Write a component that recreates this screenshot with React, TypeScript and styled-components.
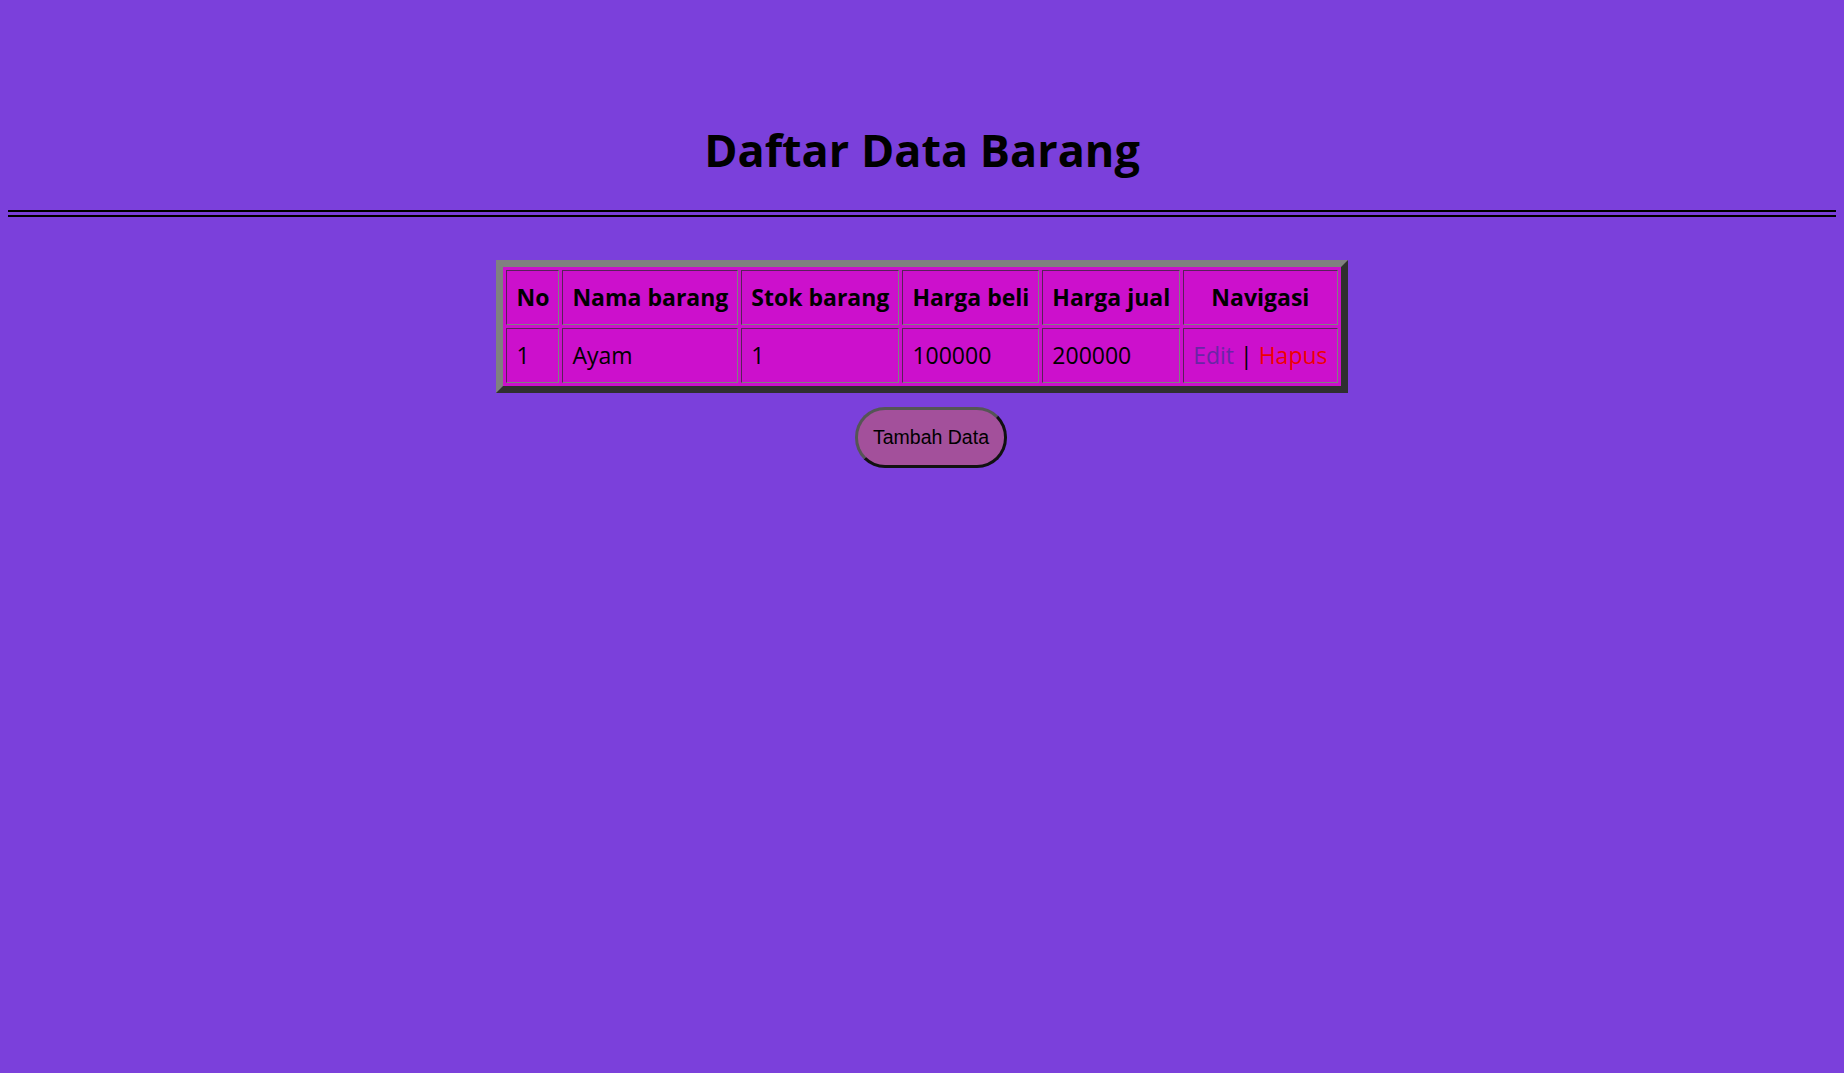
import * as React from "react";
import styled, { createGlobalStyle } from "styled-components";

const bg_color = "#7b40db";
const cell_color = "#cc10cc";

const GlobalStyle = createGlobalStyle`
  html, body {
    margin: 0;
    padding: 0;
    background-color: ${bg_color};
  }
  body {
    padding: 8px;
    font-family: "Open Sans", "Noto Sans", sans-serif;
    color: #000;
  }
`;

const Title = styled.h1`
  margin: 0;
  padding-top: 110px;
  text-align: center;
  font-size: 45px;
  line-height: 64px;
  font-weight: 700;
`;

const Divider = styled.hr`
  margin: 28px 0 0 0;
  height: 3px;
  border: none;
  border-top: 2px solid #000;
  border-bottom: 2px solid #000;
`;

const TableWrap = styled.div`
  display: flex;
  justify-content: center;
  margin-top: 43px;
`;

const Table = styled.table`
  background-color: ${cell_color};
  border-style: solid;
  border-width: 7px;
  border-color: #808080 #2f2f2f #2f2f2f #808080;
  border-spacing: 3px;
  font-size: 23px;
  line-height: 33px;
`;

const HeadCell = styled.th`
  padding: 10px 9px;
  border-style: solid;
  border-width: 1px;
  border-color: #5a1f5a #808080 #808080 #5a1f5a;
  font-weight: 700;
  white-space: nowrap;
`;

const Cell = styled.td<{ $center?: boolean }>`
  padding: 10px 9px;
  border-style: solid;
  border-width: 1px;
  border-color: #5a1f5a #808080 #808080 #5a1f5a;
  text-align: ${(p) => (p.$center ? "center" : "left")};
  white-space: nowrap;
`;

const NavLink = styled.a<{ $danger?: boolean }>`
  color: ${(p) => (p.$danger ? "#f00000" : "#6a25a6")};
  text-decoration: none;
`;

const ButtonRow = styled.div`
  display: flex;
  justify-content: center;
  margin-top: 14px;
  padding-left: 18px;
`;

const AddButton = styled.button`
  font-family: "Liberation Sans", Arial, sans-serif;
  font-size: 19.5px;
  color: #000;
  background-color: #a3509b;
  padding: 16px 15px;
  border-radius: 30px;
  border-style: solid;
  border-width: 3px;
  border-color: #555 #111 #111 #555;
  cursor: pointer;
`;

const rows = [
  { no: 1, nama: "Ayam", stok: 1, beli: 100000, jual: 200000 },
];

const App = () => {
  return (
    <>
      <GlobalStyle />
      <Title>Daftar Data Barang</Title>
      <Divider />
      <TableWrap>
        <Table>
          <thead>
            <tr>
              <HeadCell>No</HeadCell>
              <HeadCell>Nama barang</HeadCell>
              <HeadCell>Stok barang</HeadCell>
              <HeadCell>Harga beli</HeadCell>
              <HeadCell>Harga jual</HeadCell>
              <HeadCell>Navigasi</HeadCell>
            </tr>
          </thead>
          <tbody>
            {rows.map((row) => (
              <tr key={row.no}>
                <Cell>{row.no}</Cell>
                <Cell>{row.nama}</Cell>
                <Cell>{row.stok}</Cell>
                <Cell>{row.beli}</Cell>
                <Cell>{row.jual}</Cell>
                <Cell $center>
                  <NavLink href="#">Edit</NavLink> | <NavLink href="#" $danger>Hapus</NavLink>
                </Cell>
              </tr>
            ))}
          </tbody>
        </Table>
      </TableWrap>
      <ButtonRow>
        <AddButton>Tambah Data</AddButton>
      </ButtonRow>
    </>
  );
};

export default App;
